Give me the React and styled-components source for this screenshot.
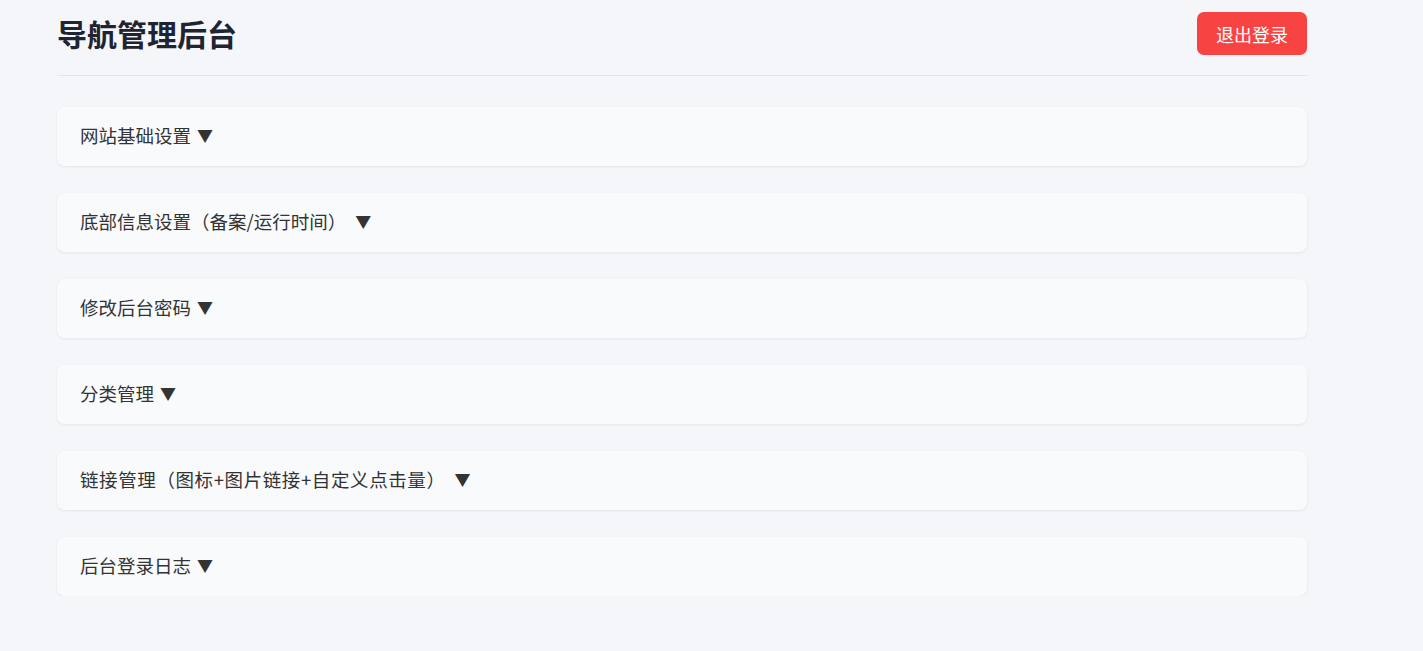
import React from "react";
import styled, { createGlobalStyle } from "styled-components";

const Global = createGlobalStyle`
  html, body { margin: 0; padding: 0; background: #f5f6fa; }
  body { font-family: "Noto Sans CJK SC", "Noto Sans", sans-serif; color: #333; }
`;

const Page = styled.div`
  width: 1250px;
  margin-left: 57px;
`;

const Header = styled.header`
  display: flex;
  align-items: center;
  justify-content: space-between;
  padding: 12px 0 20px;
  border-bottom: 1px solid #e3e5ea;
  margin-bottom: 31px;
`;

const Title = styled.h1`
  margin: 0;
  font-size: 30px;
  font-weight: 700;
  color: #1f2430;
  line-height: 43px;
`;

const Logout = styled.button`
  height: 43px;
  padding: 0 19px;
  border: none;
  border-radius: 7px;
  background: #f84343;
  color: #fff;
  font-family: inherit;
  font-size: 18px;
  cursor: pointer;
`;

const List = styled.div`
  display: flex;
  flex-direction: column;
  gap: 27px;
`;

const Card = styled.div`
  background: #f9fafc;
  border-radius: 8px;
  box-shadow: 0 1px 3px rgba(0, 0, 0, 0.07);
  height: 59px;
  box-sizing: border-box;
  display: flex;
  align-items: center;
  padding: 0 23px 3px;
  font-size: 18.5px;
  color: #333;
`;

const Label = styled.span`
  letter-spacing: ${(p) => p.$ls || 0}px;
`;

const Arrow = styled.span`
  color: #333;
  font-size: 16px;
  margin-left: ${(p) => p.$gap}px;
`;

const sections = [
  { t: "网站基础设置", g: 6 },
  { t: "底部信息设置（备案/运行时间）", g: 9 },
  { t: "修改后台密码", g: 6 },
  { t: "分类管理", g: 6 },
  { t: "链接管理（图标+图片链接+自定义点击量）", g: 9, ls: 0.6 },
  { t: "后台登录日志", g: 6 },
];

export default function App() {
  return (
    <>
      <Global />
      <Page>
        <Header>
          <Title>导航管理后台</Title>
          <Logout>退出登录</Logout>
        </Header>
        <List>
          {sections.map((s) => (
            <Card key={s.t}>
              <Label $ls={s.ls}>{s.t}</Label>
              <Arrow $gap={s.g}>▼</Arrow>
            </Card>
          ))}
        </List>
      </Page>
    </>
  );
}
